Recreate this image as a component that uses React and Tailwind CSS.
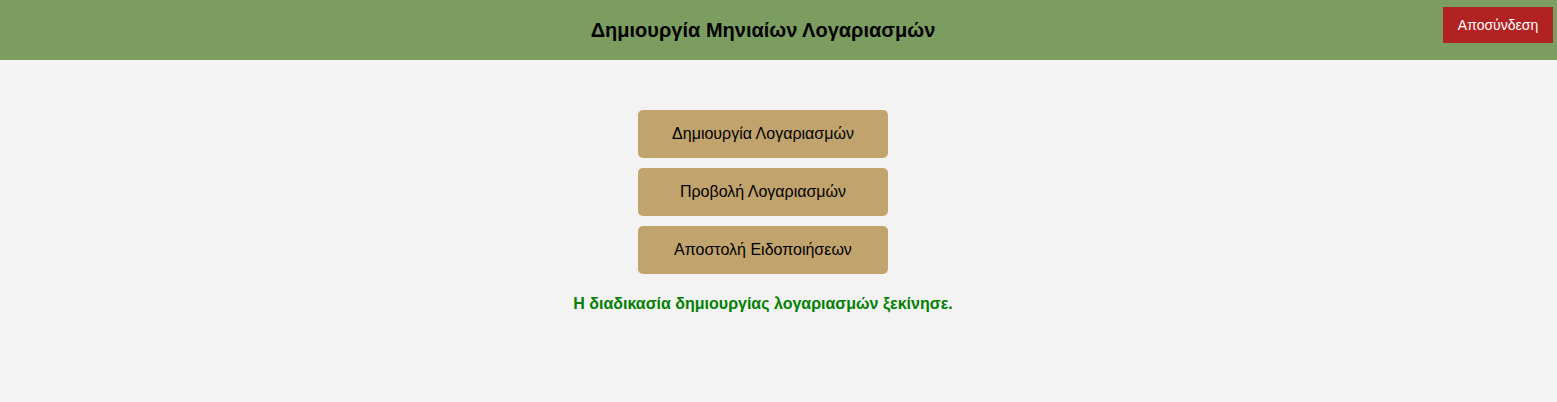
import { useState } from 'react';

export default function App() {
  const [message] = useState('Η διαδικασία δημιουργίας λογαριασμών ξεκίνησε.');

  const actions = ['Δημιουργία Λογαριασμών', 'Προβολή Λογαριασμών', 'Αποστολή Ειδοποιήσεων'];

  return (
    <div className="min-h-[402px] bg-[#f3f3f3] font-['Liberation_Sans',Arial,sans-serif]">
      <header className="relative flex h-[60px] items-center bg-[#7b9d60] pr-[31px]">
        <h1 className="flex-1 text-center text-[20px] font-bold text-black">Δημιουργία Μηνιαίων Λογαριασμών</h1>
        <button className="absolute right-[4px] top-[7px] h-[36px] w-[110px] bg-[#b22222] text-[14px] text-white">
          Αποσύνδεση
        </button>
      </header>

      <main className="flex flex-col items-center gap-[10px] pr-[31px] pt-[50px]">
        {actions.map(label => (
          <button
            key={label}
            className="h-[48px] w-[250px] rounded-[5px] bg-[#c1a46d] text-[16px] text-black"
          >
            {label}
          </button>
        ))}
        <p className="mt-[8px] text-[16px] font-bold text-[#008000]">{message}</p>
      </main>
    </div>
  );
}
